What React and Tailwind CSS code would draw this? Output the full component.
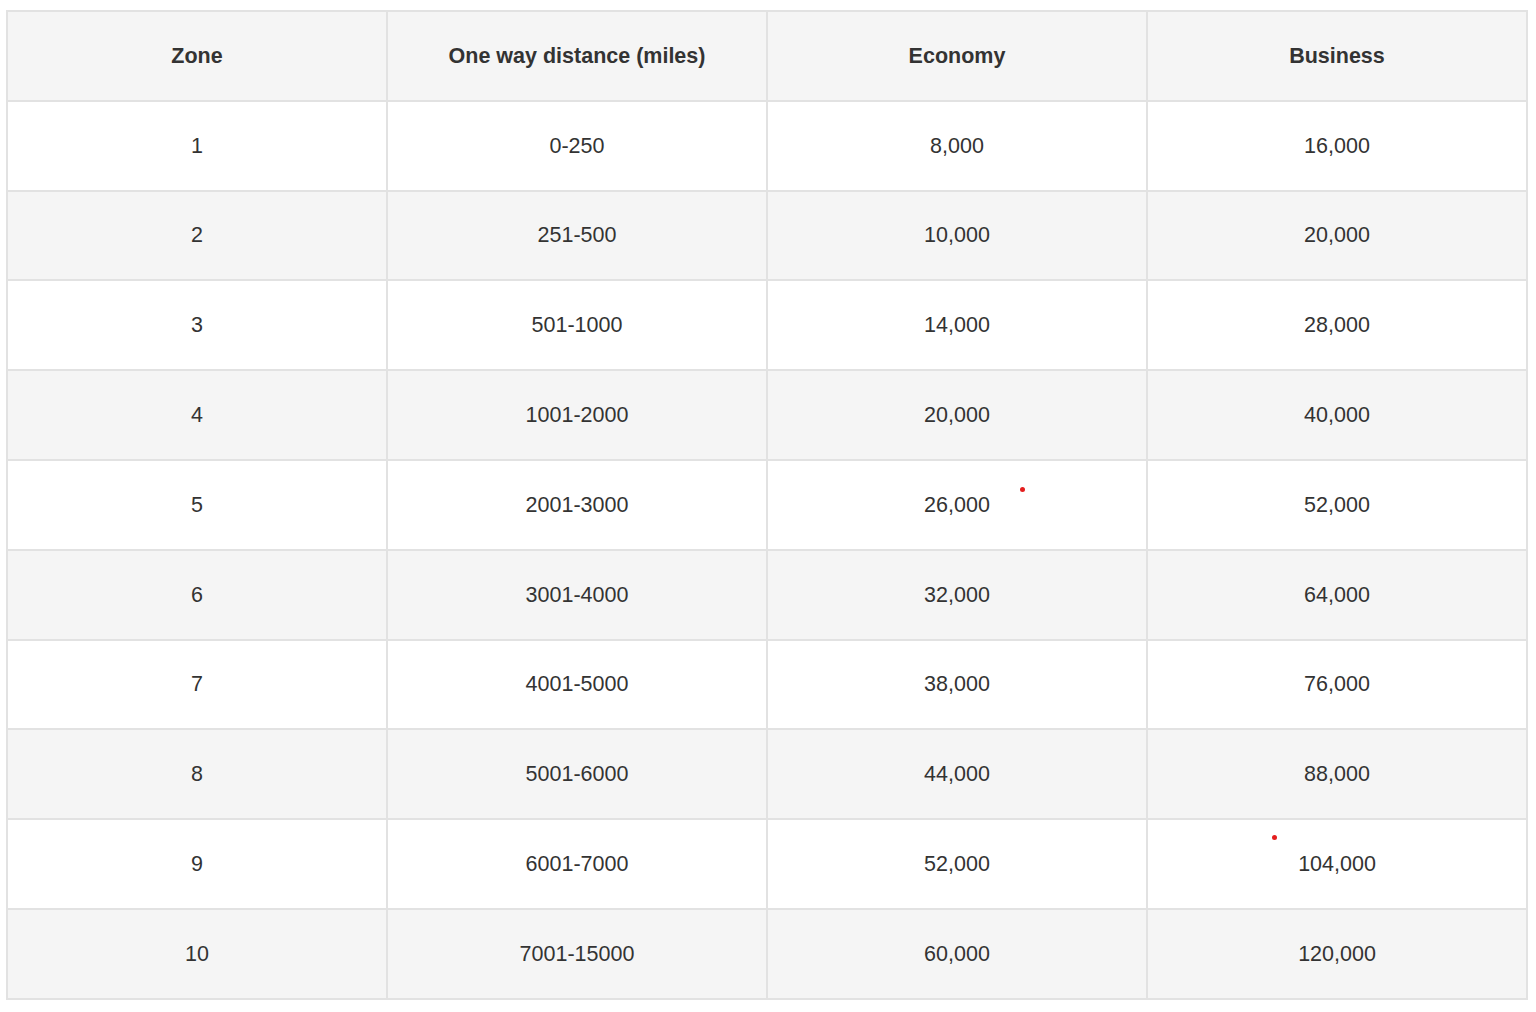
import React from "react";

const rows = [
  ["1", "0-250", "8,000", "16,000"],
  ["2", "251-500", "10,000", "20,000"],
  ["3", "501-1000", "14,000", "28,000"],
  ["4", "1001-2000", "20,000", "40,000"],
  ["5", "2001-3000", "26,000", "52,000"],
  ["6", "3001-4000", "32,000", "64,000"],
  ["7", "4001-5000", "38,000", "76,000"],
  ["8", "5001-6000", "44,000", "88,000"],
  ["9", "6001-7000", "52,000", "104,000"],
  ["10", "7001-15000", "60,000", "120,000"],
];

const headers = ["Zone", "One way distance (miles)", "Economy", "Business"];

export default function App() {
  return (
    <div
      className="relative min-h-[1012px] bg-white pl-[6px] pt-[10px]"
      style={{ fontFamily: '"Liberation Sans", Arial, sans-serif' }}
    >
      <table className="w-[1522px] table-fixed border-collapse border-2 border-[#e2e2e2] text-[21.5px] text-[#333333]">
        <thead>
          <tr className="h-[89.8px] bg-[#f5f5f5]">
            {headers.map((h) => (
              <th key={h} className="border-2 border-[#e2e2e2] text-center font-bold">
                {h}
              </th>
            ))}
          </tr>
        </thead>
        <tbody>
          {rows.map((r, i) => (
            <tr key={i} className={i % 2 === 0 ? "h-[89.8px] bg-white" : "h-[89.8px] bg-[#f5f5f5]"}>
              {r.map((c, j) => (
                <td key={j} className="border-2 border-[#e2e2e2] text-center">
                  {c}
                </td>
              ))}
            </tr>
          ))}
        </tbody>
      </table>
      <span className="absolute left-[1020px] top-[487px] h-[5px] w-[5px] rounded-full bg-[#e41e1e]" />
      <span className="absolute left-[1272px] top-[835px] h-[5px] w-[5px] rounded-full bg-[#e41e1e]" />
    </div>
  );
}
